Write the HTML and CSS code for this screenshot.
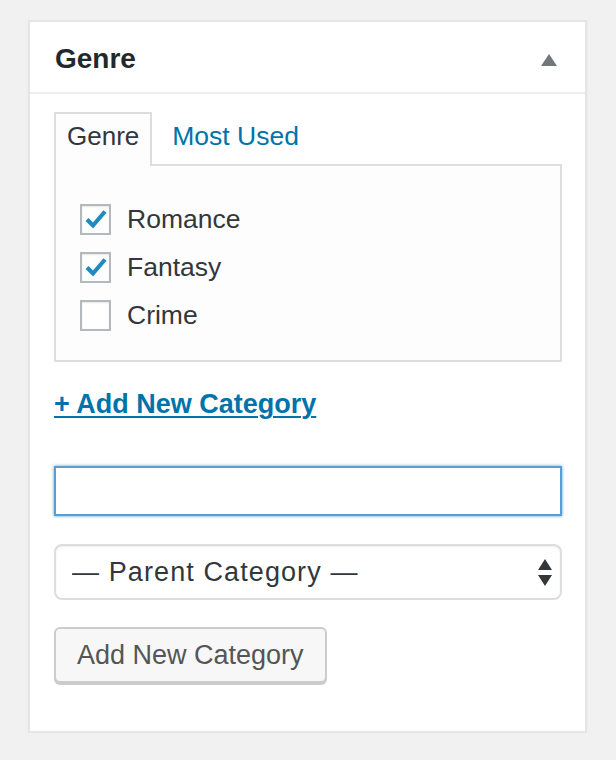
FILE: index.html
```html
<!DOCTYPE html>
<html lang="en">
<head>
  <meta charset="UTF-8"/>
  <title>Genre</title>
  <link rel="stylesheet" href="styles.css">
</head>
<body>
  <div class="postbox">
    <div class="postbox-head">
      <h2>Genre</h2>
      <svg class="toggle" width="16" height="12" viewBox="0 0 16 12"><path d="M8 0 L16 12 L0 12 Z" fill="#72777c"/></svg>
    </div>
    <div class="inside">
      <ul class="tabs">
        <li class="tab active">Genre</li>
        <li class="tab"><a href="#">Most Used</a></li>
      </ul>
      <div class="tabs-panel">
        <label class="row"><span class="cb checked"><svg width="22" height="20" viewBox="0 0 22 20"><path d="M2 10.5 L8 16.5 L20 2.5" fill="none" stroke="#1e8cbe" stroke-width="4.2"/></svg></span>Romance</label>
        <label class="row"><span class="cb checked"><svg width="22" height="20" viewBox="0 0 22 20"><path d="M2 10.5 L8 16.5 L20 2.5" fill="none" stroke="#1e8cbe" stroke-width="4.2"/></svg></span>Fantasy</label>
        <label class="row"><span class="cb"></span>Crime</label>
      </div>
      <a class="add-link" href="#">+ Add New Category</a>
      <input class="new-cat" type="text">
      <div class="select-wrap">
        <select class="parent">
          <option>— Parent Category —</option>
        </select>
        <svg class="arrows" width="14" height="28" viewBox="0 0 14 28"><path d="M7 0 L14 11 L0 11 Z M0 16 L14 16 L7 27 Z" fill="#32373c"/></svg>
      </div>
      <div><button class="button">Add New Category</button></div>
    </div>
  </div>
</body>
</html>
```

FILE: styles.css
```css
body { margin: 0; padding: 20px 0 0 28px; background: #f1f1f1; font-family: "Liberation Sans", Arial, sans-serif; color: #32373c; }
.postbox { width: 559px; box-sizing: border-box; background: #fff; border: 2px solid #e5e5e5; box-shadow: 0 2px 2px rgba(0,0,0,.04); }
.postbox-head { display: flex; align-items: center; justify-content: space-between; height: 70px; padding: 0 27px 0 25px; border-bottom: 2px solid #eee; }
.postbox-head h2 { margin: 4px 0 0; font-size: 28px; font-weight: bold; color: #23282d; }
.toggle { margin-top: 6px; margin-right: 1px; }
.inside { padding: 18px 23px 48px 24px; }
.tabs { display: flex; margin: 0; padding: 0; list-style: none; position: relative; z-index: 1; }
.tab { font-size: 26px; line-height: 44px; padding: 0 11px 6px; border: 2px solid transparent; border-bottom: none; }
.tab.active { border-color: #ddd; background: #fdfdfd; margin-bottom: -2px; color: #32373c; }
.tab a { color: #0073aa; text-decoration: none; padding-left: 7px; font-size: 26.5px; }
.tabs-panel { border: 2px solid #ddd; background: #fdfdfd; padding: 29px 24px 21px; }
.row { display: flex; align-items: center; height: 48px; font-size: 26.5px; color: #32373c; }
.cb { width: 31px; height: 31px; box-sizing: border-box; border: 2px solid #b4b9be; background: #fff; box-shadow: inset 0 1px 2px rgba(0,0,0,.1); margin-right: 16px; display: flex; align-items: center; justify-content: center; }
.cb svg { margin-left: 1px; }
.add-link { display: inline-block; margin-top: 27px; line-height: 30px; font-size: 27px; font-weight: bold; color: #0073aa; text-decoration: underline; text-decoration-thickness: 2px; text-underline-offset: 3px; }
.new-cat { display: block; width: 100%; box-sizing: border-box; height: 50px; margin-top: 47px; border: 2px solid #5b9dd9; box-shadow: 0 0 3px rgba(30,140,190,.8); outline: none; font-size: 26px; }
.select-wrap { position: relative; margin-top: 28px; }
.parent { display: block; width: 100%; height: 56px; box-sizing: border-box; -webkit-appearance: none; appearance: none; border: 2px solid #ddd; border-radius: 8px; background: #fff; box-shadow: inset 0 1px 2px rgba(0,0,0,.07); padding: 0 16px; font-family: "Liberation Sans", Arial, sans-serif; font-size: 27px; letter-spacing: 1.1px; color: #32373c; }
.arrows { position: absolute; right: 10px; top: 15px; pointer-events: none; }
.button { margin-top: 27px; height: 56px; padding: 0 21px; border: 2px solid #ccc; border-radius: 6px; background: #f7f7f7; box-shadow: 0 2px 0 #ccc; font-family: "Liberation Sans", Arial, sans-serif; font-size: 27px; color: #555; }
```
